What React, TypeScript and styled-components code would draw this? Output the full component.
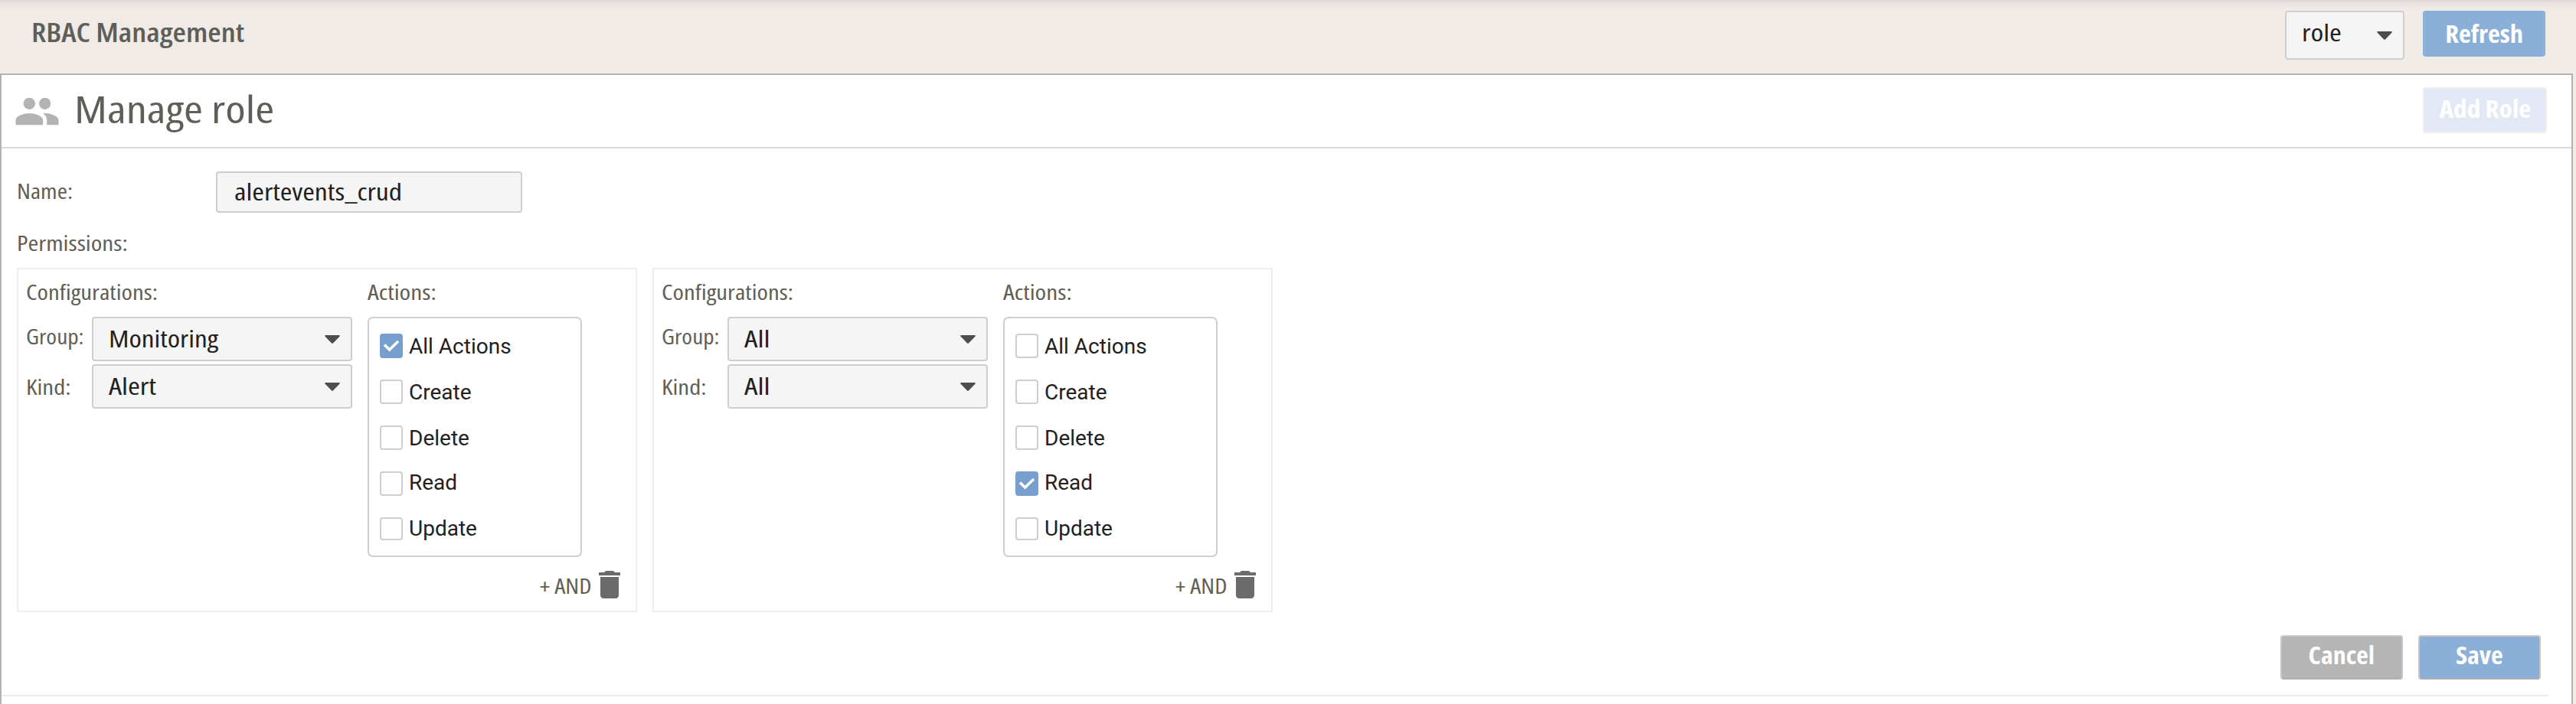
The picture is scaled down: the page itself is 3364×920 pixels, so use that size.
import React from 'react';
import styled, { createGlobalStyle } from 'styled-components';

const GlobalStyle = createGlobalStyle`
  * { box-sizing: border-box; }
  body {
    margin: 0;
    background: #f0ebe7;
    font-family: 'Open Sans', sans-serif;
    font-stretch: 75%;
    overflow: hidden;
  }
`;

const Page = styled.div`
  width: 100%;
  height: 920px;
  overflow: hidden;
  display: flex;
  flex-direction: column;
  background: #f0ebe7;
`;

const Wide = styled.span<{ $by: number; $from?: string }>`
  display: inline-block;
  transform: scaleX(${(p) => p.$by});
  transform-origin: ${(p) => p.$from ?? 'left'} center;
`;

const TopBar = styled.header`
  flex: none;
  height: 96px;
  padding: 14px 40px 0 41px;
  display: flex;
  align-items: flex-start;
  background: linear-gradient(#dcd7d4 0, #e6e1dd 3px, #ece7e3 7px, #f0ebe7 13px);
`;

const AppTitle = styled.h1`
  margin: 0 auto 0 0;
  font-size: 35px;
  font-weight: 650;
  line-height: 55px;
  color: #5f5f59;
  white-space: nowrap;
`;

const Panel = styled.main`
  flex: none;
  height: 840px;
  margin-right: 4px;
  border: 2px solid #b2b2b2;
  background: #fff;
`;

const PanelHeader = styled.div`
  height: 96px;
  padding: 0 32px 0 16px;
  display: flex;
  border-bottom: 2px solid #d9d9d9;
`;

const PeopleIcon = styled.svg`
  width: 61px;
  height: 61px;
  margin-top: 17px;
  fill: #b3b3b3;
`;

const PanelTitle = styled.h2`
  margin: 0 auto 0 18px;
  font-size: 50px;
  font-weight: 500;
  line-height: 89px;
  color: #5f5f59;
  white-space: nowrap;
`;

const HeaderAction = styled.div`
  padding-top: 16px;
`;

type ButtonTone = 'primary' | 'outlinedPrimary' | 'disabled' | 'neutral';

const tones: Record<ButtonTone, { fill: string; edge: string }> = {
  primary: { fill: '#8aafd9', edge: '#8aafd9' },
  outlinedPrimary: { fill: '#8aafd9', edge: '#c6c6c6 #c6c6c6 #acacac' },
  disabled: { fill: '#e2e9f5', edge: '#eeeeef' },
  neutral: { fill: '#b5b5b5', edge: '#c9c9c9 #c6c6c6 #b0b0b0' },
};

const Button = styled.button<{ $tone: ButtonTone; $width?: number; $height: number; $line: number }>`
  flex: none;
  width: ${(p) => p.$width ?? 160}px;
  height: ${(p) => p.$height}px;
  padding: 0;
  display: flex;
  justify-content: center;
  align-items: flex-start;
  border: 2px solid;
  border-color: ${(p) => tones[p.$tone].edge};
  border-radius: 4px;
  background: ${(p) => tones[p.$tone].fill};
  color: #fff;
  font-family: inherit;
  font-stretch: inherit;
  font-size: 32px;
  font-weight: 700;
  line-height: ${(p) => p.$line}px;
  white-space: nowrap;
`;

const FieldBox = styled.div<{ $width: number; $height: number }>`
  flex: none;
  width: ${(p) => p.$width}px;
  height: ${(p) => p.$height}px;
  padding: 0 14px 0 20px;
  display: flex;
  justify-content: space-between;
  border: 2px solid #cecece;
  border-radius: 4px;
  background: #f5f5f5;
  color: #212121;
`;

const FieldValue = styled.span<{ $line?: number; $indent?: number }>`
  margin-left: ${(p) => p.$indent ?? 0}px;
  font-size: 31px;
  font-weight: 500;
  line-height: ${(p) => p.$line ?? 52}px;
  white-space: nowrap;
`;

const Caret = styled.svg`
  width: 20px;
  height: 11px;
  align-self: center;
  fill: #4d4d4d;
`;

const Label = styled.div<{ $line: number; $width?: number; $height?: number }>`
  width: ${(p) => (p.$width ? `${p.$width}px` : 'auto')};
  height: ${(p) => (p.$height ? `${p.$height}px` : 'auto')};
  font-size: 27px;
  font-weight: 500;
  line-height: ${(p) => p.$line}px;
  color: #5f5f59;
  white-space: nowrap;
`;

const Form = styled.section`
  padding: 30px 0 0 20px;
`;

const NameRow = styled.div`
  height: 54px;
  display: flex;
`;

const Cards = styled.div`
  display: flex;
  gap: 20px;
`;

const Card = styled.article`
  width: 810px;
  height: 450px;
  border: 2px solid #eee;
`;

const CardBody = styled.div`
  display: flex;
  gap: 20px;
  padding-left: 10px;
`;

const ConfigColumn = styled.div`
  width: 426px;
`;

const ConfigRow = styled.div`
  display: flex;
  height: 58px;
  margin-bottom: 4px;
`;

const ActionsColumn = styled.div`
  width: 280px;
`;

const ActionList = styled.ul`
  margin: 0;
  height: 314px;
  padding: 20px 14px 0;
  list-style: none;
  border: 2px solid #cecece;
  border-radius: 7px;
`;

const ActionItem = styled.li`
  height: 60px;
  display: flex;
  gap: 8px;
`;

const CheckBox = styled.span<{ $checked: boolean }>`
  width: 30px;
  height: 32px;
  display: flex;
  justify-content: center;
  align-items: center;
  border: 2px solid ${(p) => (p.$checked ? '#779fce' : '#cecece')};
  border-radius: 4px;
  background: ${(p) => (p.$checked ? '#779fce' : '#fff')};
  li:last-child > & { height: 30px; }
`;

const ActionName = styled.span<{ $raised: boolean }>`
  font-family: Roboto, sans-serif;
  font-stretch: 100%;
  font-size: 28px;
  line-height: ${(p) => (p.$raised ? 30 : 33)}px;
  color: #212121;
  white-space: nowrap;
`;

const CardFooter = styled.div`
  display: flex;
  justify-content: flex-end;
  padding: 12px 10px 0 0;
`;

const TrashIcon = styled.svg`
  width: 48px;
  height: 48px;
  fill: #6b6b6b;
`;

const FormActions = styled.div`
  height: 110px;
  margin-right: 30px;
  padding: 30px 10px 0 0;
  display: flex;
  justify-content: flex-end;
  gap: 20px;
  border-bottom: 2px solid #ebebeb;
`;

const RoleFilter = styled.div`
  margin-right: 24px;
`;

interface Option {
  text: string;
  by: number;
}

function Select({ value, width, height }: { value: Option; width: number; height: number }) {
  return (
    <FieldBox $width={width} $height={height}>
      <FieldValue><Wide $by={value.by}>{value.text}</Wide></FieldValue>
      <Caret viewBox="0 0 20 11">
        <path d="M1 0h18q1.4.6.4 1.7L10.9 10.4q-.9.9-1.8 0L.6 1.7Q-.4.6 1 0z" />
      </Caret>
    </FieldBox>
  );
}

const ACTIONS = ['All Actions', 'Create', 'Delete', 'Read', 'Update'];

function PermissionCard({ group, kind, checked }: { group: Option; kind: Option; checked: string }) {
  return (
    <Card>
      <CardBody>
        <ConfigColumn>
          <Label $line={59} $height={62}><Wide $by={1.215}>Configurations:</Wide></Label>
          <ConfigRow>
            <Label $line={51} $width={86}><Wide $by={1.16}>Group:</Wide></Label>
            <Select value={group} width={340} height={58} />
          </ConfigRow>
          <ConfigRow>
            <Label $line={59} $width={86}><Wide $by={1.22}>Kind:</Wide></Label>
            <Select value={kind} width={340} height={58} />
          </ConfigRow>
        </ConfigColumn>
        <ActionsColumn>
          <Label $line={59} $height={62}><Wide $by={1.235}>Actions:</Wide></Label>
          <ActionList>
            {ACTIONS.map((name) => (
              <ActionItem key={name}>
                <CheckBox $checked={name === checked}>
                  {name === checked && (
                    <svg width="22" height="18" viewBox="0 0 22 18">
                      <path d="M2 7.5 8.6 14 20 3" fill="none" stroke="#fff" strokeWidth="3.6" />
                    </svg>
                  )}
                </CheckBox>
                <ActionName $raised={name === 'Read' || name === 'Update'}>{name}</ActionName>
              </ActionItem>
            ))}
          </ActionList>
        </ActionsColumn>
      </CardBody>
      <CardFooter>
        <Label $line={51}><Wide $by={1.18} $from="right">+ AND</Wide></Label>
        <TrashIcon viewBox="0 0 24 24">
          <path d="M6 19c0 1.1.9 2 2 2h8c1.1 0 2-.9 2-2V7H6v12zM19 4h-3.5l-1-1h-5l-1 1H5v2h14V4z" />
        </TrashIcon>
      </CardFooter>
    </Card>
  );
}

export default function App() {
  return (
    <>
      <GlobalStyle />
      <Page>
        <TopBar>
          <AppTitle><Wide $by={1.14}>RBAC Management</Wide></AppTitle>
          <RoleFilter>
            <Select value={{ text: 'role', by: 1.23 }} width={156} height={64} />
          </RoleFilter>
          <Button $tone="primary" $height={60} $line={55}><Wide $by={1.08} $from="center">Refresh</Wide></Button>
        </TopBar>
        <Panel>
          <PanelHeader>
            <PeopleIcon viewBox="0 0 24 24">
              <path d="M16 11c1.66 0 2.99-1.34 2.99-3S17.66 5 16 5s-3 1.34-3 3 1.34 3 3 3zm-8 0c1.66 0 2.99-1.34 2.99-3S9.66 5 8 5 5 6.34 5 8s1.34 3 3 3zm0 2c-2.33 0-7 1.17-7 3.5V19h14v-2.5c0-2.33-4.67-3.5-7-3.5zm8 0c-.29 0-.62.02-.97.05 1.16.84 1.97 1.97 1.97 3.45V19h6v-2.5c0-2.33-4.67-3.5-7-3.5z" />
            </PeopleIcon>
            <PanelTitle><Wide $by={1.207}>Manage role</Wide></PanelTitle>
            <HeaderAction>
              <Button $tone="disabled" $width={162} $height={60} $line={51}>
                <Wide $by={1.1} $from="center">Add Role</Wide>
              </Button>
            </HeaderAction>
          </PanelHeader>
          <Form>
            <NameRow>
              <Label $line={51} $width={260}><Wide $by={1.185}>Name:</Wide></Label>
              <FieldBox $width={400} $height={54}>
                <FieldValue $line={48} $indent={2}><Wide $by={1.22}>alertevents_crud</Wide></FieldValue>
              </FieldBox>
            </NameRow>
            <Label $line={79} $height={72}><Wide $by={1.23}>Permissions:</Wide></Label>
            <Cards>
              <PermissionCard
                group={{ text: 'Monitoring', by: 1.2 }}
                kind={{ text: 'Alert', by: 1.24 }}
                checked="All Actions"
              />
              <PermissionCard
                group={{ text: 'All', by: 1.27 }}
                kind={{ text: 'All', by: 1.27 }}
                checked="Read"
              />
            </Cards>
          </Form>
          <FormActions>
            <Button $tone="neutral" $height={58} $line={47}><Wide $by={1.06} $from="center">Cancel</Wide></Button>
            <Button $tone="outlinedPrimary" $height={58} $line={47}><Wide $by={1.07} $from="center">Save</Wide></Button>
          </FormActions>
        </Panel>
      </Page>
    </>
  );
}
